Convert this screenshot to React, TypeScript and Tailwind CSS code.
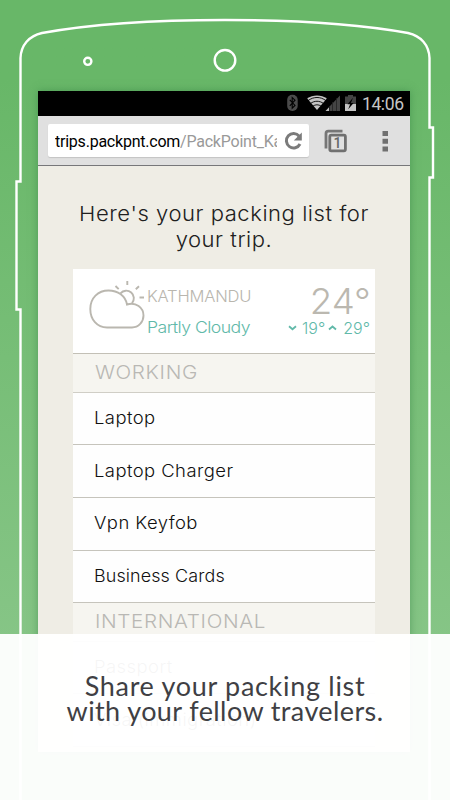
import React from "react";

function PhoneOutline() {
  return (
    <svg className="absolute inset-0" width="450" height="800" viewBox="0 0 450 800" fill="none" stroke="#fff" strokeWidth="2.4">
      <path d="M20.500 800V309.500H16.500V181.500H20.500V58C21 45 29 36 42 33C100 22.500 165 20 225 20S350 22.500 408 33C421 36 429 45 429.500 58V127.500H433V177.500H429.500V800" />
      <circle cx="87.800" cy="61.300" r="3.600" />
      <circle cx="225" cy="60.300" r="10.300" />
    </svg>
  );
}

function StatusBar() {
  return (
    <div className="flex h-[25px] items-center justify-end bg-black pr-[6px]">
      <svg width="76" height="25" viewBox="286 91 76 25">
        <rect x="287.200" y="94.800" width="10.500" height="16.200" rx="5" fill="#4b4b4b" />
        <path d="M289.800 99.800l5.200 5.700-2.800 2.700v-10.600l2.800 2.600-5.200 5.700" stroke="#000" strokeWidth="1.100" fill="none" />
        <path d="M317 110L307.200 98.600C312.500 94.300 321.500 94.300 326.800 98.600Z" fill="#c4c4c4" />
        <g fill="none" stroke="#000" strokeWidth="0.900">
          <path d="M308 100.700c5.500-4.300 12.500-4.300 18 0M310.500 103.500c4-3 9-3 13 0M312.800 106.200c2.600-1.900 5.800-1.900 8.400 0" />
        </g>
        <path d="M325.500 111L329 107.200V111Z" fill="#bdbdbd" />
        <path d="M329.500 106.600L340 95.500V111H329.500Z" fill="#444" />
        <path d="M332.500 102v9M336.500 98v13" stroke="#222" strokeWidth="0.800" />
        <path d="M348 95h5v1.600h3V104h-11v-7.400h3z" fill="#444" />
        <path d="M345 104h11v7h-11z" fill="#c4c4c4" />
        <path d="M352.800 98l-5.300 6.200h2.600l-1.900 5 5.400-6.300h-2.700l2-4.900" fill="#000" />
      </svg>
      <span className="w-[42px] whitespace-nowrap pt-[1px] font-['Roboto',sans-serif] text-[17.500px] leading-[25px] tracking-[-0.4px] text-[#c6c6c6]">14:06</span>
    </div>
  );
}

function Toolbar() {
  return (
    <div className="flex h-[50px] items-start border-b border-[#77777a] bg-[#e0e0e0] pl-[10px] pt-[8px]">
      <div className="flex h-[33px] w-[261px] items-center rounded-[2px] bg-white pl-[7px] shadow-[0_1px_1px_#c4c4c4]">
        <div className="w-[222px] overflow-hidden whitespace-nowrap pt-[2px] font-['Roboto',sans-serif] text-base leading-[22px] tracking-[-0.230px] text-[#999]">
          <span className="text-black">trips.packpnt.com</span>/PackPoint_Ka
        </div>
        <svg className="ml-[6px]" width="20" height="20" viewBox="283 131 20 20">
          <path d="M299.200 136.200A7.200 7.200 0 1 0 300 144" fill="none" stroke="#7b7b7b" strokeWidth="3" />
          <path d="M301.800 132.500v8h-8z" fill="#7b7b7b" />
        </svg>
      </div>
      <div className="relative ml-[12px] h-[34px] w-[85px]">
        <svg width="85" height="34" viewBox="321 124 85 34">
          <path d="M326 148.500V133.500Q326 131.200 328.300 131.200H342.500" fill="none" stroke="#767676" strokeWidth="2.800" />
          <rect x="329.800" y="135.200" width="15.600" height="15.600" rx="1.500" fill="none" stroke="#707070" strokeWidth="2.800" />
          <path d="M382.500 131h5.500v5h-5.500zm0 7.700h5.500v5h-5.500zm0 7.700h5.500v5h-5.500z" fill="#707070" />
        </svg>
        <span className="absolute left-[12.500px] top-[12px] font-['Roboto',sans-serif] text-[14px] font-medium leading-[14px] text-[#666]">1</span>
      </div>
    </div>
  );
}

function Weather() {
  return (
    <div className="flex h-[85px] border-b border-[#c3c0b6] bg-white">
      <svg className="ml-[15px] mt-[8px]" width="59" height="57" viewBox="88 277 59 57" fill="none" stroke="#bab7af" strokeWidth="1.900">
        <path d="M107 327.500C97 327.500 90.300 319.500 90.300 309C90.300 298 98 290.500 108.500 290.500C118 290.500 125.500 296 127 304.500C136 301.500 143.500 308 143.500 315.500C143.500 322 138.500 327.500 132 327.500Z" />
        <path d="M120.500 293.300A7.400 7.400 0 1 1 132 303.200M127.300 281v4M115.500 286l3.200 3.200M139 286.200l-3.200 3M139.500 297.500h4.500" />
      </svg>
      <div className="w-[130px] origin-left scale-x-[1.07] whitespace-nowrap font-['Inter',sans-serif] font-light">
        <div className="mt-[18px] text-[15.500px] leading-[20px] tracking-[-0.200px] text-[#b9b6ae]">KATHMANDU</div>
        <div className="mt-[10px] text-[16.500px] leading-[20px] tracking-[-0.500px] text-[#61b9a9]">Partly Cloudy</div>
      </div>
      <div className="ml-auto mr-[4px] flex flex-col items-end whitespace-nowrap font-['Inter',sans-serif] font-light">
        <div className="mt-[12px] origin-right scale-x-[1.02] text-[36px] leading-[40px] text-[#bbb8b0]">24°</div>
        <div className="mr-[1px] flex items-center text-base leading-[14px] text-[#61b9a9]">
          <svg width="9" height="6" viewBox="0 0 9 6" fill="none" stroke="currentColor" strokeWidth="1.800"><path d="M1 1.200L4.500 4.200 8 1.200" /></svg>
          <span className="ml-[5px]">19°</span>
          <svg className="ml-[3px]" width="9" height="6" viewBox="0 0 9 6" fill="none" stroke="currentColor" strokeWidth="1.800"><path d="M1 4.500L4.500 1.500 8 4.500" /></svg>
          <span className="ml-[6px]">29°</span>
        </div>
      </div>
    </div>
  );
}

function Category({ children }: { children: string }) {
  return (
    <div className="flex h-[38.500px] items-center border-b border-[#d0cec6] bg-[#f6f5f0] pl-[22px] pt-[1px] font-['Inter',sans-serif] text-[19px] font-light tracking-[0.6px] text-[#b9b8b4]">
      <span className="origin-left scale-x-[1.085]">{children}</span>
    </div>
  );
}

function Item({ children, tight = false }: { children: string; tight?: boolean }) {
  return (
    <div className="flex h-[52.700px] items-center border-b border-[#c6c4bc] bg-[#fefefe] pl-[21px] pt-[1px] font-['Inter',sans-serif] text-[17px] font-light text-[#111]">
      <span className={tight ? "origin-left scale-x-[1.055] tracking-[0.100px]" : "origin-left scale-x-[1.085] tracking-[0.400px]"}>{children}</span>
    </div>
  );
}

export default function App() {
  return (
    <div className="relative h-[800px] w-[450px] overflow-hidden bg-linear-to-b from-[#68b768] from-10% to-[#86c586] to-80% pl-[38px] pt-[91px]">
      <PhoneOutline />
      <div className="relative h-[661px] w-[372px] overflow-hidden bg-[#efede5] shadow-[0_0_8px_#2b7b3d80]">
        <StatusBar />
        <Toolbar />
        <h1 className="mt-[35px] scale-x-[1.075] text-center font-['Inter',sans-serif] text-[20.500px] font-light leading-[26px] tracking-[0.5px] text-[#202020]">
          Here's your packing list for<br />your trip.
        </h1>
        <div className="ml-[35px] mt-[16px] w-[302px]">
          <Weather />
          <Category>WORKING</Category>
          <Item>Laptop</Item>
          <Item>Laptop Charger</Item>
          <Item>Vpn Keyfob</Item>
          <Item tight>Business Cards</Item>
          <Category>INTERNATIONAL</Category>
          <Item>Passport</Item>
          <Item>Visa (immigration)</Item>
        </div>
      </div>
      <div className="absolute inset-x-0 bottom-0 h-[166px] bg-white/96 pt-[39px] text-center font-['Lato',sans-serif] text-[27px] leading-[25px] text-[#403f44]">
        <div className="tracking-[0.700px]">Share your packing list</div>
        <div className="tracking-[0.400px]">with your fellow travelers.</div>
      </div>
    </div>
  );
}
